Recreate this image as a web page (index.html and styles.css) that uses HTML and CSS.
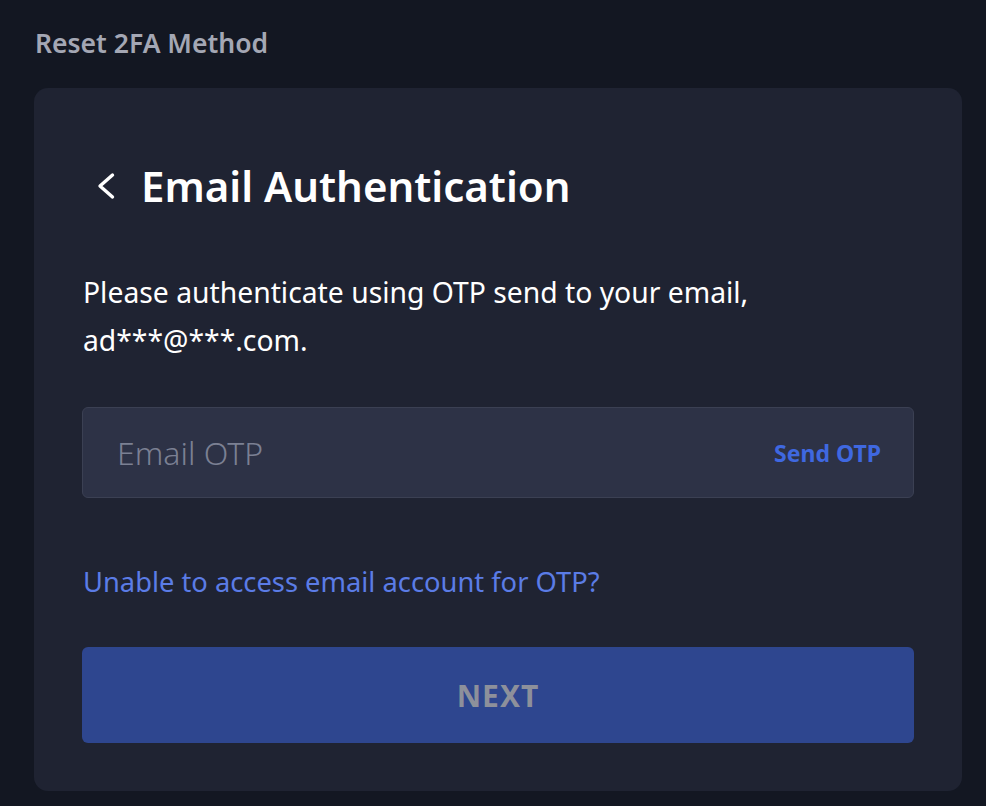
FILE: index.html
```html
<!DOCTYPE html>
<html lang="en">
<head>
<meta charset="utf-8">
<title>Reset 2FA Method</title>
<link rel="stylesheet" href="styles.css">
</head>
<body>
<div class="page">
  <h2 class="section-title">Reset 2FA Method</h2>
  <div class="card">
    <div class="title-row">
      <button class="back" aria-label="Back">
        <svg width="18" height="28" viewBox="0 0 18 28"><path d="M15.5 3 L3 14 L15.5 25" fill="none" stroke="#ffffff" stroke-width="3.4" stroke-linecap="round" stroke-linejoin="round"/></svg>
      </button>
      <h1 class="title">Email Authentication</h1>
    </div>
    <p class="desc">Please authenticate using OTP send to your email, ad***@***.com.</p>
    <div class="field">
      <input class="field-input" type="text" placeholder="Email OTP">
      <span class="send">Send OTP</span>
    </div>
    <a class="help" href="#">Unable to access email account for OTP?</a>
    <button class="next">NEXT</button>
  </div>
</div>
</body>
</html>
```

FILE: styles.css
```css
html, body {
  margin: 0;
  padding: 0;
  background: #131722;
  font-family: "Noto Sans", "Open Sans", sans-serif;
}
.page {
  padding: 26px 24px 16px 34px;
  display: flex;
  flex-direction: column;
}
.section-title {
  margin: 0 0 28px 1px;
  font-size: 26.5px;
  line-height: 34px;
  font-weight: 600;
  color: #a4a7b4;
}
.card {
  width: 928px;
  box-sizing: border-box;
  background: #1f2332;
  border-radius: 14px;
  padding: 66px 48px 48px 48px;
  display: flex;
  flex-direction: column;
}
.title-row {
  display: flex;
  align-items: center;
  gap: 26px;
}
.back {
  background: none;
  border: 0;
  padding: 0;
  margin-left: 15px;
  display: flex;
  cursor: pointer;
}
.title {
  margin: 0;
  font-size: 42px;
  line-height: 64px;
  font-weight: 600;
  color: #ffffff;
}
.desc {
  margin: 50px 0 0 1px;
  font-size: 28.3px;
  line-height: 48px;
  color: #ffffff;
  max-width: 700px;
}
.field {
  margin-top: 43px;
  height: 91px;
  box-sizing: border-box;
  background: #2d3246;
  border: 1.5px solid #3b4053;
  border-radius: 6px;
  display: flex;
  align-items: center;
  padding: 0 32px 0 34px;
}
.field-input {
  flex: 1;
  background: transparent;
  border: 0;
  outline: none;
  font-family: inherit;
  font-size: 32px;
  font-weight: 300;
  color: #ffffff;
  padding: 0;
}
.field-input::placeholder {
  color: #7b8093;
}
.send {
  font-size: 23px;
  font-weight: 700;
  color: #3f68e0;
}
.help {
  margin-top: 66px;
  margin-left: 1px;
  font-size: 27.3px;
  line-height: 36px;
  color: #5b7ce6;
  text-decoration: none;
}
.next {
  margin-top: 47px;
  height: 96px;
  border: 0;
  border-radius: 6px;
  background: #2e468f;
  color: #8d909b;
  font-family: inherit;
  font-size: 30px;
  font-weight: 700;
  letter-spacing: 1px;
}
```
